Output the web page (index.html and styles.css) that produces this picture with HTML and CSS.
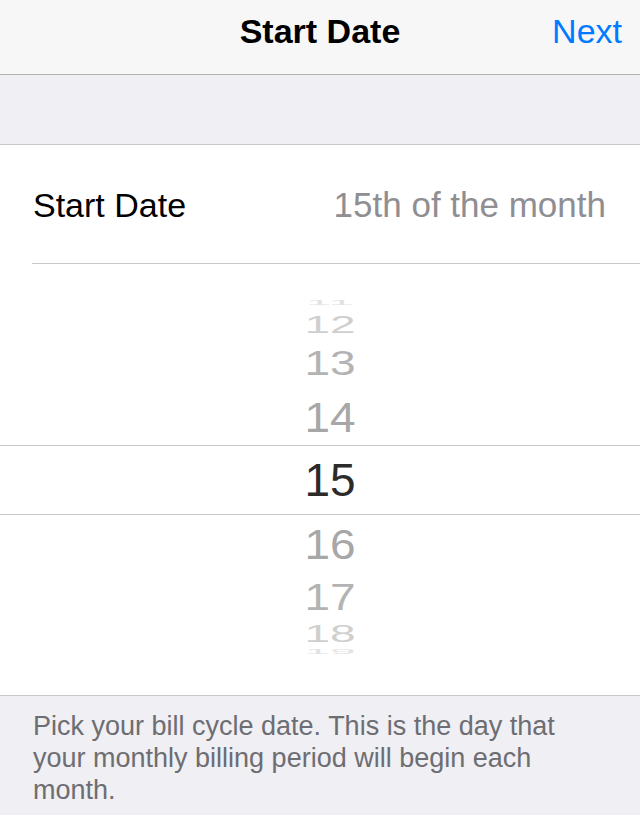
FILE: index.html
```html
<!DOCTYPE html>
<html lang="en">
<head>
    <meta charset="UTF-8">
    <meta name="viewport" content="width=device-width, initial-scale=1.0">
    <title>Start Date</title>
    <link rel="stylesheet" href="styles.css">
</head>
<body>
    <div id="nav">
        <div class="nav-side"></div>
        <div class="nav-title">Start Date</div>
        <div class="nav-side nav-next">Next</div>
    </div>
    <div class="gap"></div>
    <div class="cell">
        <div class="cell-label">Start Date</div>
        <div class="cell-value">15th of the month</div>
    </div>
    <div id="picker">
        <div class="row r11"><span>11</span></div>
        <div class="row r12"><span>12</span></div>
        <div class="row r13"><span>13</span></div>
        <div class="row r14"><span>14</span></div>
        <div class="row sel"><span>15</span></div>
        <div class="row r16"><span>16</span></div>
        <div class="row r17"><span>17</span></div>
        <div class="row r18"><span>18</span></div>
        <div class="row r19"><span>19</span></div>
    </div>
    <div class="footer">
        Pick your bill cycle date. This is the day that your monthly billing period will begin each month.
    </div>
</body>
</html>
```

FILE: styles.css
```css
*{
    margin: 0;
    padding: 0;
    box-sizing: border-box;
}
body{
    width: 640px;
    height: 815px;
    overflow: hidden;
    font-family: "Liberation Sans", Arial, sans-serif;
    background: #efeff4;
}
#nav{
    height: 75px;
    background: #f7f7f7;
    border-bottom: 1px solid #b2b2b2;
    display: flex;
    padding: 11px 18px 0 18px;
    line-height: 40px;
    font-size: 34px;
}
.nav-side{
    width: 100px;
}
.nav-title{
    flex: 1;
    text-align: center;
    font-weight: bold;
    color: #000;
}
.nav-next{
    text-align: right;
    color: #007aff;
}
.gap{
    height: 70px;
    border-bottom: 1px solid #c8c7cc;
}
.cell{
    background: #fff;
    height: 119px;
    display: flex;
    justify-content: space-between;
    align-items: center;
    padding: 0 34px 0 33px;
    font-size: 34px;
    line-height: 40px;
    position: relative;
}
.cell::after{
    content: "";
    position: absolute;
    left: 32px;
    right: 0;
    bottom: 0;
    border-bottom: 1px solid #c8c7cc;
}
.cell-label{
    color: #000;
}
.cell-value{
    font-size: 35px;
    color: #8e8e93;
}
#picker{
    background: #fff;
    height: 432px;
    padding-top: 30px;
    border-bottom: 1px solid #c8c7cc;
    display: flex;
    flex-direction: column;
    font-size: 46px;
}
.row{
    display: flex;
    align-items: center;
    justify-content: center;
    padding-left: 20px;
    color: #a7a7a7;
    overflow: hidden;
}
.row span{
    display: block;
    line-height: 46px;
}
.r11{ height: 18px; color: #e2e2e2; }
.r11 span{ transform: scaleY(0.15); }
.r12{ height: 25px; color: #cfcfcf; }
.r12 span{ transform: scaleY(0.5); }
.r13{ height: 52px; color: #b3b3b3; }
.r13 span{ transform: scaleY(0.78); }
.r14{ height: 56px; }
.r14 span{ transform: scaleY(0.92); }
.sel{
    height: 70px;
    border-top: 1px solid #c8c7cc;
    border-bottom: 1px solid #c8c7cc;
    color: #2b2b2b;
}
.r16{ height: 58px; }
.r16 span{ transform: scaleY(0.93); }
.r17{ height: 48px; color: #b3b3b3; }
.r17 span{ transform: scaleY(0.8); }
.r18{ height: 25px; color: #cfcfcf; }
.r18 span{ transform: scaleY(0.5); }
.r19{ height: 12px; color: #e2e2e2; }
.r19 span{ transform: scaleY(0.15); }
.footer{
    padding: 14px 33px 0 33px;
    font-size: 27px;
    line-height: 32px;
    color: #6d6d72;
}
```
